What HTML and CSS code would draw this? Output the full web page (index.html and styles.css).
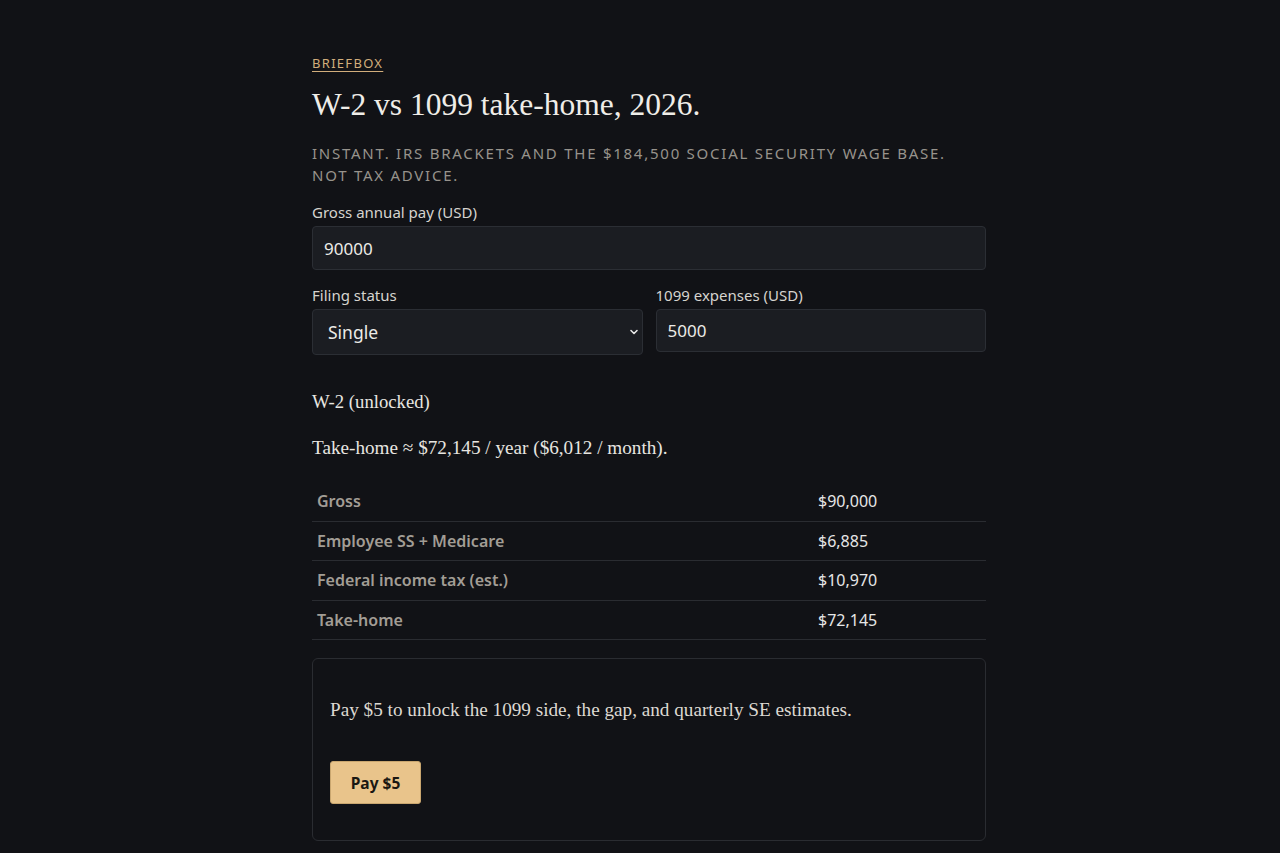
FILE: index.html
```html
<!DOCTYPE html>
<html lang="en">
<head>
  <meta charset="UTF-8" />
  <title>W-2 vs 1099 take-home, 2026 - Briefbox</title>
  <link rel="stylesheet" href="styles.css">
</head>
<body>

  <main class="pagina">
    <a class="marca" href="#">BRIEFBOX</a>
    <h1>W-2 vs 1099 take-home, 2026.</h1>
    <p class="sub">Instant. IRS brackets and the $184,500 Social Security wage base.<br>Not tax advice.</p>

    <div class="campo">
      <label for="gross">Gross annual pay (USD)</label>
      <input id="gross" type="text" value="90000" />
    </div>

    <div class="fila">
      <div class="campo">
        <label for="status">Filing status</label>
        <div class="select-wrap">
          <select id="status">
            <option>Single</option>
            <option>Married filing jointly</option>
            <option>Head of household</option>
          </select>
          <svg class="chevron" width="10" height="10" viewBox="0 0 10 10">
            <path d="M2 3.5 L5 6.5 L8 3.5" fill="none" stroke="#e6e6e6" stroke-width="1.6" stroke-linecap="round" stroke-linejoin="round"/>
          </svg>
        </div>
      </div>
      <div class="campo">
        <label for="gastos">1099 expenses (USD)</label>
        <input id="gastos" class="corto" type="text" value="5000" />
      </div>
    </div>

    <h2>W-2 (unlocked)</h2>
    <p class="resumen">Take-home ≈ $72,145 / year ($6,012 / month).</p>

    <table class="tabla">
      <tr><td>Gross</td><td>$90,000</td></tr>
      <tr><td>Employee SS + Medicare</td><td>$6,885</td></tr>
      <tr><td>Federal income tax (est.)</td><td>$10,970</td></tr>
      <tr><td>Take-home</td><td>$72,145</td></tr>
    </table>

    <section class="pago">
      <p>Pay $5 to unlock the 1099 side, the gap, and quarterly SE estimates.</p>
      <button>Pay $5</button>
    </section>
  </main>

</body>
</html>
```

FILE: styles.css
```css
* { box-sizing: border-box; margin: 0; padding: 0; }

body {
  background: #111216;
  color: #e6e4df;
  font-family: 'Liberation Serif', 'Times New Roman', serif;
  min-height: 100vh;
}

.pagina {
  width: 674px;
  margin-left: 312px;
  padding-top: 54px;
  padding-bottom: 40px;
}

.marca {
  font-family: 'Noto Sans', sans-serif;
  font-size: 13px;
  letter-spacing: 1.3px;
  color: #d2ae7c;
  text-decoration: underline;
  text-underline-offset: 3px;
  line-height: 17px;
  display: inline-block;
}

h1 {
  font-weight: normal;
  font-size: 31.5px;
  line-height: 40px;
  margin-top: 13px;
  color: #efede8;
}

.sub {
  font-family: 'Noto Sans', sans-serif;
  font-size: 15px;
  letter-spacing: 1.75px;
  text-transform: uppercase;
  color: #97938c;
  line-height: 22px;
  margin-top: 17px;
}

.campo {
  display: flex;
  flex-direction: column;
  flex: 1;
}

.campo label {
  font-family: 'Noto Sans', sans-serif;
  font-size: 15px;
  color: #d6d4cf;
  line-height: 20px;
  margin-bottom: 4px;
}

.pagina > .campo { margin-top: 16px; }

input, select {
  font-family: 'Noto Sans', sans-serif;
  font-size: 17px;
  color: #ecebe7;
  background: #1b1d22;
  border: 1px solid #2b2e34;
  border-radius: 4px;
  height: 44px;
  padding: 0 11px;
  width: 100%;
}

input:focus, select:focus { outline: none; }

.fila {
  display: flex;
  gap: 13px;
  margin-top: 15px;
}

.select-wrap { position: relative; }

select {
  appearance: none;
  height: 46px;
  padding: 0 15px;
  font-size: 17.5px;
}

.chevron {
  position: absolute;
  right: 4px;
  top: 18px;
  pointer-events: none;
}

input.corto { height: 43px; }

h2 {
  font-weight: normal;
  font-size: 18.7px;
  line-height: 24px;
  margin-top: 35px;
  color: #e8e6e1;
}

.resumen {
  font-size: 19.2px;
  line-height: 26px;
  margin-top: 21px;
  color: #e8e6e1;
}

.tabla {
  width: 100%;
  border-collapse: collapse;
  margin-top: 21px;
  font-family: 'Noto Sans', sans-serif;
  font-size: 16px;
  line-height: 22px;
}

.tabla td {
  padding: 8.25px 5px;
  border-bottom: 1px solid #2a2c31;
}

.tabla td:first-child {
  width: 501px;
  font-weight: 600;
  color: #a29d95;
}

.tabla td:last-child {
  color: #e6e6e6;
}

.pago {
  margin-top: 18px;
  border: 1px solid #2a2c31;
  border-radius: 6px;
  padding: 38px 17px 36px;
}

.pago p {
  font-size: 19.2px;
  line-height: 26px;
  color: #ddd9d2;
}

.pago button {
  margin-top: 38px;
  background: #e9c48b;
  color: #1a1712;
  border: 1px solid #c9a66f;
  border-radius: 3px;
  font-family: 'Noto Sans', sans-serif;
  font-weight: bold;
  font-size: 15.5px;
  width: 91px;
  height: 43px;
  cursor: pointer;
}
```
